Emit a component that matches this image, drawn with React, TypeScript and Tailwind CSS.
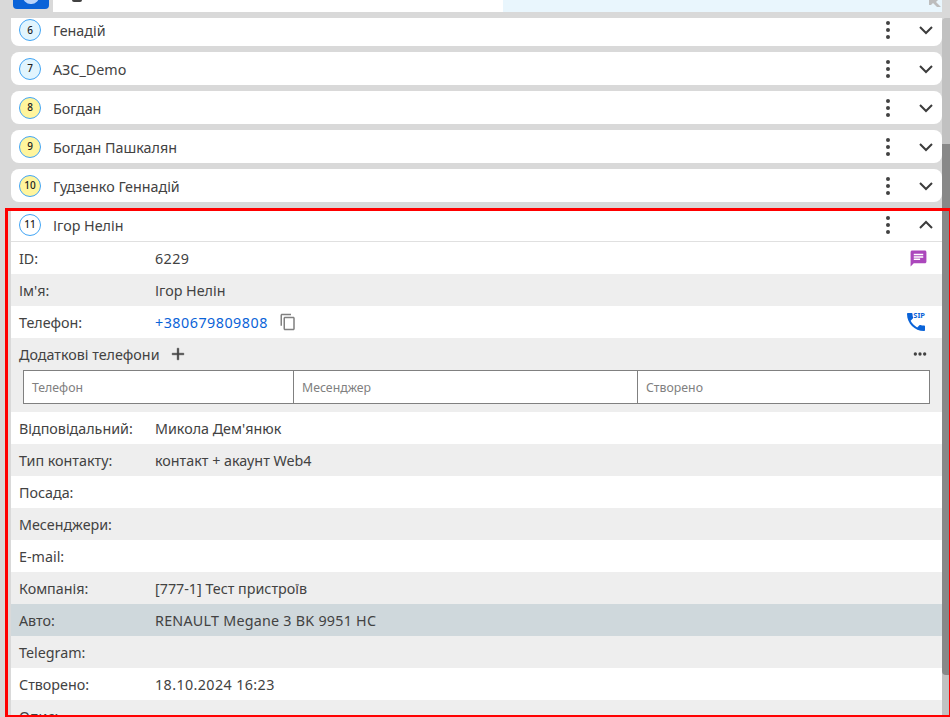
import React from 'react';

const font = "font-['Noto_Sans',sans-serif]";

const contacts = [
  { n: 7, name: 'АЗС_Demo', badge: 'bg-[#e1f5fe]' },
  { n: 8, name: 'Богдан', badge: 'bg-[#fff59d]' },
  { n: 9, name: 'Богдан Пашкалян', badge: 'bg-[#fff59d]' },
  { n: 10, name: 'Гудзенко Геннадій', badge: 'bg-[#fff59d]' },
];

const Dots = () => (
  <svg width="24" height="24" viewBox="0 0 24 24" fill="#424242">
    <circle cx="12" cy="5" r="2" />
    <circle cx="12" cy="12" r="2" />
    <circle cx="12" cy="19" r="2" />
  </svg>
);

const Chevron = ({ up = false }: { up?: boolean }) => (
  <svg width="24" height="24" viewBox="0 0 24 24" fill="none" stroke="#3c3c3c" strokeWidth="2" className={up ? 'rotate-180' : ''}>
    <path d="M6 9l6 6 6-6" />
  </svg>
);

const CardHead = ({ n, name, badge, up, h = 'h-[33px]' }: { n: number; name: string; badge: string; up?: boolean; h?: string }) => (
  <div className={`flex items-center ${h} pl-2 pr-1`}>
    <div className={`flex h-[22px] w-[22px] items-center justify-center rounded-full border border-[#42a5f5] text-[10px] font-medium text-[#212121] ${badge}`}>{n}</div>
    <div className="ml-3 flex-1 pt-[2px] text-[14.3px] text-[#424242]">{name}</div>
    <Dots />
    <div className="ml-[14px]">
      <Chevron up={up} />
    </div>
  </div>
);

const Row = ({ label, value, bg = 'bg-white', children }: { label: string; value?: React.ReactNode; bg?: string; children?: React.ReactNode }) => (
  <div className={`flex h-8 items-center pl-2 pr-[14px] text-[14.3px] text-[#424242] ${bg}`}>
    <div className="w-[136px] shrink-0 pt-[2px]">{label}</div>
    <div className="flex flex-1 items-center">
      {value && <span className="pt-[2px]">{value}</span>}
      {children}
    </div>
  </div>
);

export default function App() {
  return (
    <div className={`relative flex h-[717px] flex-col overflow-hidden bg-[#d9d9d9] ${font}`}>
      {/* search bar, cut off by the top of the window */}
      <div className="flex h-3 shrink-0 pl-[13px] pr-2">
        <div className="h-[9px] w-9 overflow-hidden rounded-b bg-[#0a63d8]">
          <div className="mx-auto -mt-[11px] h-[15px] w-4 rounded-full bg-[#b9d4fa]" />
        </div>
        <div className="ml-1 w-[450px] bg-white pl-[19px]">
          <div className="h-[2px] w-[10px] rounded-b-full bg-[#424242]" />
        </div>
        <div className="flex flex-1 justify-end bg-[#e9f6fd] pr-[1px]">
          <svg width="12" height="7" viewBox="0 0 12 7" fill="#bdbdbd">
            <path d="M0 0h9L7 2l5 5H8L4 3 2 5H0z" />
          </svg>
        </div>
      </div>

      <div className="mt-[6px] flex min-h-0 flex-1">
        <div className="flex min-w-0 flex-1 flex-col gap-[6px] pl-[11px]">
          <div className="rounded-b-lg bg-white pb-1">
            <CardHead n={6} name="Генадій" badge="bg-[#e1f5fe]" h="h-[24px]" />
          </div>
          {contacts.map((c) => (
            <div key={c.n} className="rounded-lg bg-white">
              <CardHead n={c.n} name={c.name} badge={c.badge} />
            </div>
          ))}
          <div className="flex-1 overflow-hidden bg-white">
            <div className="border-b border-[#e0e0e0]">
              <CardHead n={11} name="Ігор Нелін" badge="bg-white" up />
            </div>
            <Row label="ID:" value={<span className="tracking-[0.4px]">6229</span>}>
              <svg className="ml-auto" width="19" height="19" viewBox="0 0 24 24" fill="#ab47bc">
                <path d="M20 2H4c-1.1 0-1.99.9-1.99 2L2 22l4-4h14c1.1 0 2-.9 2-2V4c0-1.1-.9-2-2-2zM6 9h12v2H6V9zm8 5H6v-2h8v2zm4-6H6V6h12v2z" />
              </svg>
            </Row>
            <Row label="Ім'я:" value="Ігор Нелін" bg="bg-[#eeeeee]" />
            <Row label="Телефон:">
              <span className="pt-[2px] tracking-[0.5px] text-[#0a63d8]">+380679809808</span>
              <svg className="ml-[11px]" width="18" height="18" viewBox="0 0 24 24" fill="#808080">
                <path d="M16 1H4c-1.1 0-2 .9-2 2v14h2V3h12V1zm3 4H8c-1.1 0-2 .9-2 2v14c0 1.1.9 2 2 2h11c1.1 0 2-.9 2-2V7c0-1.1-.9-2-2-2zm0 16H8V7h11v14z" />
              </svg>
              <div className="relative ml-auto h-6 w-6">
                <svg width="24" height="24" viewBox="0 0 24 24" fill="#0a63d8">
                  <path d="M6.62 10.79c1.44 2.83 3.76 5.14 6.59 6.59l2.2-2.2c.27-.27.67-.36 1.02-.24 1.12.37 2.33.57 3.57.57.55 0 1 .45 1 1V20c0 .55-.45 1-1 1-9.39 0-17-7.61-17-17 0-.55.45-1 1-1h3.5c.55 0 1 .45 1 1 0 1.25.2 2.45.57 3.57.11.35.03.74-.25 1.02l-2.2 2.2z" />
                </svg>
                <span className="absolute right-[3px] top-[2px] text-[7.5px] font-bold leading-none text-[#0a63d8]">SIP</span>
              </div>
            </Row>
            <div className="h-[74px] bg-[#eeeeee] pl-2 pr-[12px]">
              <div className="flex h-8 items-center text-[14.3px] text-[#424242]">
                <span className="pt-[2px]">Додаткові телефони</span>
                <svg className="ml-[8px]" width="20" height="20" viewBox="0 0 24 24" fill="#424242" stroke="#424242" strokeWidth="0.5">
                  <path d="M19 13h-6v6h-2v-6H5v-2h6V5h2v6h6v2z" />
                </svg>
                <svg className="ml-auto mr-[2px]" width="16" height="16" viewBox="0 0 24 24" fill="#424242">
                  <circle cx="5" cy="12" r="2.5" />
                  <circle cx="12" cy="12" r="2.5" />
                  <circle cx="19" cy="12" r="2.5" />
                </svg>
              </div>
              <div className="ml-[4px] flex h-[34px] border border-[#808080] bg-white text-[12.3px] text-[#808080]">
                <div className="flex w-[269px] items-center pl-2 pt-[2px]">Телефон</div>
                <div className="flex w-[344px] items-center border-l border-[#808080] pl-2 pt-[2px]">Месенджер</div>
                <div className="flex flex-1 items-center border-l border-[#808080] pl-2 pt-[2px]">Створено</div>
              </div>
            </div>
            <Row label="Відповідальний:" value="Микола Дем'янюк" />
            <Row label="Тип контакту:" value="контакт + акаунт Web4" bg="bg-[#eeeeee]" />
            <Row label="Посада:" />
            <Row label="Месенджери:" bg="bg-[#eeeeee]" />
            <Row label="E-mail:" />
            <Row label="Компанія:" value="[777-1] Тест пристроїв" bg="bg-[#eeeeee]" />
            <Row label="Авто:" value={<span className="tracking-[0.25px]">RENAULT Megane 3 BK 9951 HC</span>} bg="bg-[#cfd8dc]" />
            <Row label="Telegram:" bg="bg-[#eeeeee]" />
            <Row label="Створено:" value={<span className="tracking-[0.4px]">18.10.2024 16:23</span>} />
            <Row label="Опис:" bg="bg-[#eeeeee]" />
          </div>
        </div>
        {/* scrollbar */}
        <div className="w-2 shrink-0 rounded-tl bg-[#c1c1c1]">
          <div className="mt-[126px] h-[531px] rounded-bl-sm bg-[#888888]" />
        </div>
      </div>

      {/* red highlight frame */}
      <div className="pointer-events-none absolute bottom-0 left-[5px] right-0 top-[208px] border-b-2 border-l-[3px] border-r border-t-[3px] border-[#ff0000]" />
    </div>
  );
}
